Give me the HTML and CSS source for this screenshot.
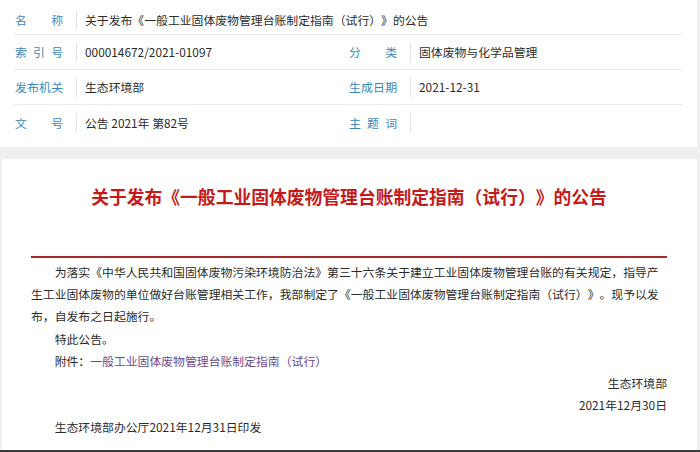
FILE: index.html
```html
<!DOCTYPE html>
<html lang="zh-CN">
<head>
<meta charset="utf-8">
<title>关于发布《一般工业固体废物管理台账制定指南（试行）》的公告</title>
<link rel="stylesheet" href="styles.css">
</head>
<body>
<div class="page">
  <section class="meta">
    <div class="row row-first">
      <div class="cell cell-wide">
        <span class="label">名称</span><span class="divider"></span>
        <span class="value">关于发布《一般工业固体废物管理台账制定指南（试行）》的公告</span>
      </div>
    </div>
    <div class="row">
      <div class="cell"><span class="label">索引号</span><span class="divider"></span><span class="value">000014672/2021-01097</span></div>
      <div class="cell"><span class="label">分类</span><span class="divider"></span><span class="value">固体废物与化学品管理</span></div>
    </div>
    <div class="row">
      <div class="cell"><span class="label">发布机关</span><span class="divider"></span><span class="value">生态环境部</span></div>
      <div class="cell"><span class="label">生成日期</span><span class="divider"></span><span class="value">2021-12-31</span></div>
    </div>
    <div class="row row-last">
      <div class="cell"><span class="label">文号</span><span class="divider"></span><span class="value">公告 2021年 第82号</span></div>
      <div class="cell"><span class="label">主题词</span><span class="divider"></span><span class="value"></span></div>
    </div>
  </section>

  <section class="article">
    <h1 class="title">关于发布《一般工业固体废物管理台账制定指南（试行）》的公告</h1>
    <div class="rule"></div>
    <div class="content">
      <p class="para indent">为落实《中华人民共和国固体废物污染环境防治法》第三十六条关于建立工业固体废物管理台账的有关规定，指导产生工业固体废物的单位做好台账管理相关工作，我部制定了《一般工业固体废物管理台账制定指南（试行）》。现予以发布，自发布之日起施行。</p>
      <p class="para indent">特此公告。</p>
      <p class="para indent">附件：<a class="attach" href="#">一般工业固体废物管理台账制定指南（试行）</a></p>
      <p class="para right">生态环境部</p>
      <p class="para right">2021年12月30日</p>
      <p class="para indent">生态环境部办公厅2021年12月31日印发</p>
    </div>
  </section>
  <div class="bottom-bar"></div>
</div>
</body>
</html>
```

FILE: styles.css
```css
* {
  box-sizing: border-box;
}

html, body {
  margin: 0;
  padding: 0;
}

body {
  background: #efeff1;
  font-family: "Noto Sans CJK SC", "Noto Sans", sans-serif;
  color: #2b2b2b;
  text-spacing-trim: space-all;
}

.page {
  width: 700px;
  height: 452px;
  overflow: hidden;
  display: flex;
  flex-direction: column;
}

/* ---------- meta table ---------- */
.meta {
  width: 697px;
  background: #ffffff;
  padding: 1px 14px 7px 14px;
}

.row {
  display: grid;
  grid-template-columns: 334px 1fr;
  height: 35px;
  border-bottom: 1px solid #ececee;
}

.row-first {
  grid-template-columns: 1fr;
  height: 34px;
  padding-top: 5px;
}

.row-last {
  border-bottom: none;
}

.cell {
  display: flex;
  align-items: center;
  padding-left: 1px;
  font-size: 11.85px;
  line-height: 18px;
}

.label {
  width: 48px;
  flex: none;
  color: #3d87b8;
  text-align: justify;
  text-align-last: justify;
}

.divider {
  width: 1px;
  height: 19px;
  flex: none;
  background: #e2e2e4;
  margin-left: 13px;
}

.value {
  margin-left: 8px;
  color: #2b2b2b;
  white-space: nowrap;
}

/* ---------- article ---------- */
.article {
  margin-top: 12px;
  margin-left: 2px;
  width: 695px;
  height: 291px;
  background: #ffffff;
  padding: 25px 30px 0 29px;
}

.title {
  margin: 0;
  font-size: 17.8px;
  line-height: 24px;
  font-weight: 700;
  color: #c41a1a;
  text-align: center;
  white-space: nowrap;
}

.rule {
  height: 2px;
  background: #a52a2d;
  margin-top: 48px;
}

.content {
  margin-top: 3px;
  font-size: 11.85px;
  line-height: 22.2px;
  color: #2b2b2b;
}

.para {
  margin: 0;
}

.indent {
  text-indent: 2em;
}

.right {
  text-align: right;
}

.attach {
  color: #6b4a8e;
  text-decoration: none;
}

.bottom-bar {
  height: 2px;
  background: #3b3b3d;
}
```
